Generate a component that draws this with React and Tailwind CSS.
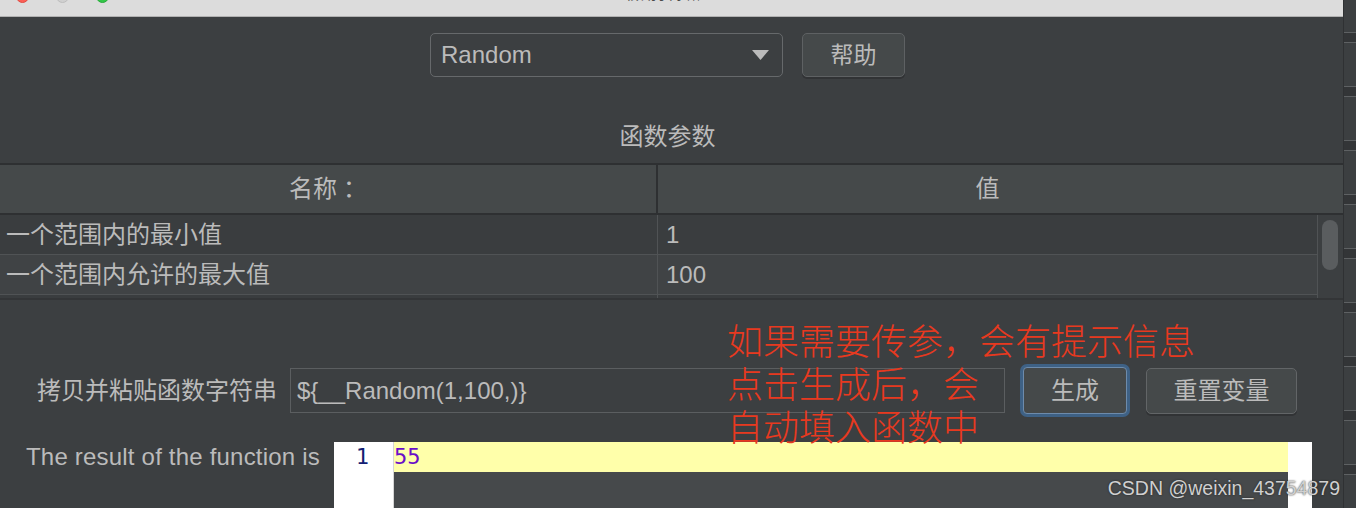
export default function App() {
  const stripRows = Array.from({ length: 9 });
  return (
    <div className="relative flex h-[508px] w-[1356px] overflow-hidden bg-[#3c3f41] font-['Liberation_Sans','Noto_Sans_CJK_SC',sans-serif] text-[#bbbbbb]">
      <div className="flex w-[1343px] shrink-0 flex-col">
        {/* title bar */}
        <div className="relative h-[17px] shrink-0 overflow-hidden border-b border-[#b1b1b1] bg-[#dcdcdc]">
          <div className="-mt-[10px] flex gap-[27px] pl-[16px]">
            <span className="h-[13px] w-[13px] rounded-full border border-[#df4a41] bg-[#fc5f57]" />
            <span className="h-[13px] w-[13px] rounded-full border border-[#bdbdbd] bg-[#d0d0d0]" />
            <span className="h-[13px] w-[13px] rounded-full border border-[#27a839] bg-[#33c748]" />
          </div>
          <div className="absolute inset-x-0 top-[-12px] pr-[17px] text-center text-[13px] leading-[13px] text-[#4a4a4a]">
            函数助手对话框
          </div>
        </div>

        {/* combo row */}
        <div className="mt-[16px] flex justify-center gap-[19px] pr-[8px]">
          <div className="flex h-[44px] w-[353px] items-center justify-between rounded-[5px] border-[1.5px] border-[#66696b] pl-[10px] pr-[13px] text-[24px]">
            <span>Random</span>
            <svg width="17" height="10" viewBox="0 0 17 10">
              <path d="M0 0H17L8.5 10Z" fill="#bbbbbb" />
            </svg>
          </div>
          <div className="flex h-[44px] w-[103px] items-center justify-center rounded-[5px] border border-[#5e6163] bg-[#45494a] text-[23px] shadow-[0_2px_0_#313335]">
            帮助
          </div>
        </div>

        {/* section title */}
        <div className="mt-[45px] h-[30px] pr-[8px] text-center text-[24px] leading-[30px]">函数参数</div>

        {/* table */}
        <div className="mt-[11px] flex flex-col">
          <div className="flex h-[52px] border-y-2 border-[#2e3032] bg-[#45494a] text-[24px]">
            <div className="flex w-[658px] items-center justify-center border-r-2 border-[#2e3032]">
              名称<span className="pl-[6px]">：</span>
            </div>
            <div className="flex w-[659px] items-center justify-center">值</div>
          </div>
          <div className="flex h-[85px] overflow-hidden border-b-2 border-[#333537]">
            <div className="flex w-[1317px] flex-col">
              <div className="flex h-[40px] shrink-0 border-b border-[#505355] bg-[#3a3d3f] text-[24px]">
                <div className="flex w-[658px] items-center border-r border-[#505355] pl-[6px]">一个范围内的最小值</div>
                <div className="flex items-center pl-[8px]">1</div>
              </div>
              <div className="flex h-[40px] shrink-0 border-b border-[#505355] bg-[#404345] text-[24px]">
                <div className="flex w-[658px] items-center border-r border-[#505355] pl-[6px]">一个范围内允许的最大值</div>
                <div className="flex items-center pl-[8px]">100</div>
              </div>
              <div className="flex h-[40px] shrink-0 bg-[#3a3d3f]">
                <div className="w-[658px] border-r border-[#505355]" />
              </div>
            </div>
            <div className="flex-1 border-l border-[#505355] pl-[4px] pt-[5px]">
              <div className="h-[50px] w-[16px] rounded-full bg-[#5a5d5f]" />
            </div>
          </div>
        </div>

        {/* function string row */}
        <div className="mt-[64px] flex h-[53px] items-center">
          <div className="pl-[37px] text-[24px]">拷贝并粘贴函数字符串</div>
          <div className="ml-[13px] flex h-[45px] w-[715px] items-center border border-[#5b5e60] pl-[6px] text-[24px]">
            {"${__Random(1,100,)}"}
          </div>
          <div className="ml-[15px] rounded-[7px] bg-[#3e6185] p-[3px]">
            <div className="flex h-[47px] w-[104px] items-center justify-center rounded-[4px] border border-[#6d8bab] bg-[#45494a] text-[24px]">
              生成
            </div>
          </div>
          <div className="ml-[16px] flex h-[46px] w-[151px] items-center justify-center rounded-[5px] border-[1.5px] border-[#626567] bg-[#45494a] text-[24px] shadow-[0_2px_0_#313335]">
            重置变量
          </div>
        </div>

        {/* result row */}
        <div className="mt-[25px] flex flex-1">
          <div className="h-[30px] w-[334px] shrink-0 pl-[26px] text-[24px] leading-[30px] tracking-[0.2px]">
            The result of the function is
          </div>
          <div className="flex w-[978px]">
            <div className="w-[60px] border-r border-[#d6d6d6] bg-white pr-[24px] text-right font-['DejaVu_Sans_Mono',monospace] text-[22px] leading-[30px] text-[#141e73]">
              1
            </div>
            <div className="flex flex-1 flex-col bg-[#46494b]">
              <div className="h-[30px] bg-[#ffffaa] font-['DejaVu_Sans_Mono',monospace] text-[22px] leading-[30px] text-[#6a0fc8]">
                55
              </div>
            </div>
            <div className="w-[24px] bg-white" />
          </div>
        </div>
      </div>

      {/* right strip */}
      <div className="flex flex-1 flex-col gap-[43px] border-l border-[#2f3133] bg-[#3c3f41] pt-[32px]">
        {stripRows.map((_, i) => (
          <div key={i} className="h-[11px] shrink-0 border-y border-[#5e6163] bg-[#333537]" />
        ))}
      </div>

      {/* red annotation */}
      <div className="absolute left-[727px] top-[318px] font-['Noto_Sans_CJK_SC',sans-serif] text-[36px] font-light leading-[43px] text-[#e8391f]">
        如果需要传参，会有提示信息
        <br />
        点击生成后，会
        <br />
        自动填入函数中
      </div>

      {/* watermark */}
      <div className="absolute right-[16px] top-[478px] text-[19.5px] leading-[20px] text-[#d0d0d0] [text-shadow:0_0_2px_#222]">
        CSDN @weixin_43754879
      </div>
    </div>
  );
}
